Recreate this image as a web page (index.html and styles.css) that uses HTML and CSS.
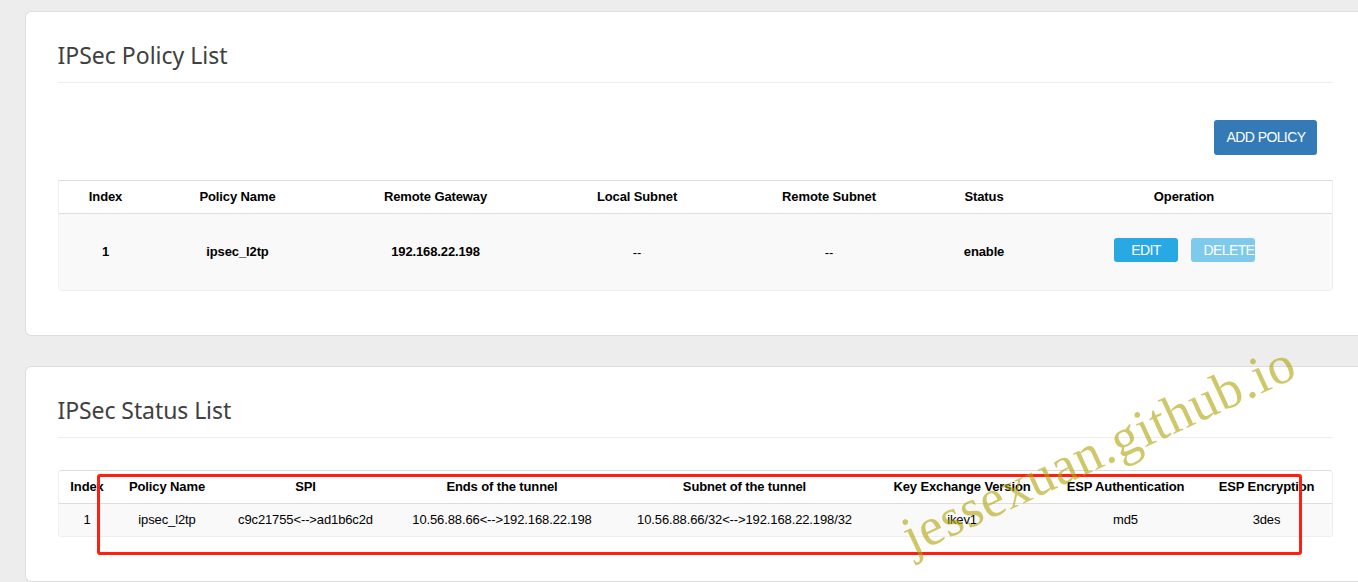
FILE: index.html
```
<!DOCTYPE html>
<html lang="en">
<head>
<meta charset="utf-8">
<title>IPSec</title>
<link rel="stylesheet" href="styles.css">
</head>
<body>
<main class="page">
  <section class="card card-policy">
    <h2 class="title">IPSec Policy List</h2>
    <div class="toolbar"><button class="btn btn-add">ADD POLICY</button></div>
    <div class="table policy">
      <div class="row head">
        <span>Index</span><span>Policy Name</span><span>Remote Gateway</span><span>Local Subnet</span><span>Remote Subnet</span><span>Status</span><span>Operation</span>
      </div>
      <div class="row body">
        <b>1</b><b>ipsec_l2tp</b><b>192.168.22.198</b><span class="none">--</span><span class="none">--</span><b>enable</b>
        <div class="actions"><button class="btn btn-row">EDIT</button><button class="btn btn-row btn-off">DELETE</button></div>
      </div>
    </div>
  </section>
  <section class="card card-status">
    <h2 class="title title-status">IPSec Status List</h2>
    <div class="table status">
      <div class="row head">
        <span>Index</span><span>Policy Name</span><span>SPI</span><span>Ends of the tunnel</span><span>Subnet of the tunnel</span><span>Key Exchange Version</span><span>ESP Authentication</span><span>ESP Encryption</span>
      </div>
      <div class="row body">
        <span>1</span><span>ipsec_l2tp</span><span>c9c21755&lt;--&gt;ad1b6c2d</span><span>10.56.88.66&lt;--&gt;192.168.22.198</span><span>10.56.88.66/32&lt;--&gt;192.168.22.198/32</span><span>ikev1</span><span>md5</span><span>3des</span>
      </div>
    </div>
  </section>
</main>
<div class="highlight"></div>
<svg class="watermark" width="1358" height="582" viewBox="0 0 1358 582"><text transform="translate(912.3 554.8) rotate(-24.8)">jessexuan.github.io</text></svg>
</body>
</html>
```
FILE: styles.css
```
* { box-sizing: border-box; }
body {
  margin: 0;
  height: 582px;
  overflow: hidden;
  position: relative;
  background: #ededed;
  color: #000;
  font: 13px/20px "Liberation Sans", Arial, sans-serif;
}
.page {
  display: flex;
  flex-direction: column;
  gap: 30px;
  padding: 11px 0 0 25px;
}
.card {
  background: #fff;
  border: 1px solid #ddd;
  border-right: 0;
  border-radius: 6px 0 0 6px;
  padding: 26px 25px 0 32px;
}
.card-policy { height: 325px; }
.card-status { height: 216px; }
.title {
  margin: 0;
  height: 45px;
  border-bottom: 1px solid #eee;
  color: #404040;
  font: 400 23px/34px "Noto Sans", sans-serif;
  text-indent: -0.5px;
}
.title-status { letter-spacing: -0.08px; }
.toolbar {
  display: flex;
  justify-content: flex-end;
  padding: 37px 16px 25px 0;
}
.btn {
  border: 0;
  border-radius: 3px;
  color: #fff;
  font: 14px/20px "Liberation Sans", Arial, sans-serif;
  white-space: nowrap;
  letter-spacing: -0.6px;
}
.btn-add {
  width: 103px;
  height: 35px;
  padding: 0 0 1px 1px;
  background: #337ab7;
}
.table {
  border: 1px solid #eee;
  border-top-color: #ddd;
  border-radius: 4px;
  overflow: hidden;
}
.policy { border-radius: 0 0 4px 4px; }
.status { margin-top: 32px; }
.row {
  display: grid;
  align-items: center;
  text-align: center;
  white-space: nowrap;
}
.row > span, .row > b { letter-spacing: -0.12px; }
.policy .row { grid-template-columns: 93px 171px 225px 178px 206px 104px 1fr; }
.status .row { grid-template-columns: 56px 104px 173px 220px 265px 170px 157px 1fr; padding-right: 3px; }
.head {
  height: 33px;
  padding-bottom: 1px;
  font-weight: 700;
  border-bottom: 1px solid #ddd;
}
.body { background: #f9f9f9; }
.policy .body { height: 76px; }
.status .body { height: 32px; }
.none { padding-top: 2px; }
.actions {
  display: flex;
  justify-content: center;
  gap: 13px;
  padding-bottom: 4px;
}
.btn-row {
  width: 64px;
  height: 24px;
  padding: 0 0 0 1px;
  background: #28a9e3;
}
.btn-off {
  background: #7dcaed;
  padding-left: 13px;
  text-align: left;
  overflow: hidden;
}
.highlight {
  position: absolute;
  left: 97px;
  top: 474px;
  width: 1205px;
  height: 81px;
  border: 3px solid #ff1e10;
  border-radius: 3px;
}
.watermark {
  position: absolute;
  left: 0;
  top: 0;
  font: 53.5px "Liberation Serif", "Times New Roman", serif;
  letter-spacing: 0.7px;
  fill: rgba(175, 163, 8, 0.6);
}
```
